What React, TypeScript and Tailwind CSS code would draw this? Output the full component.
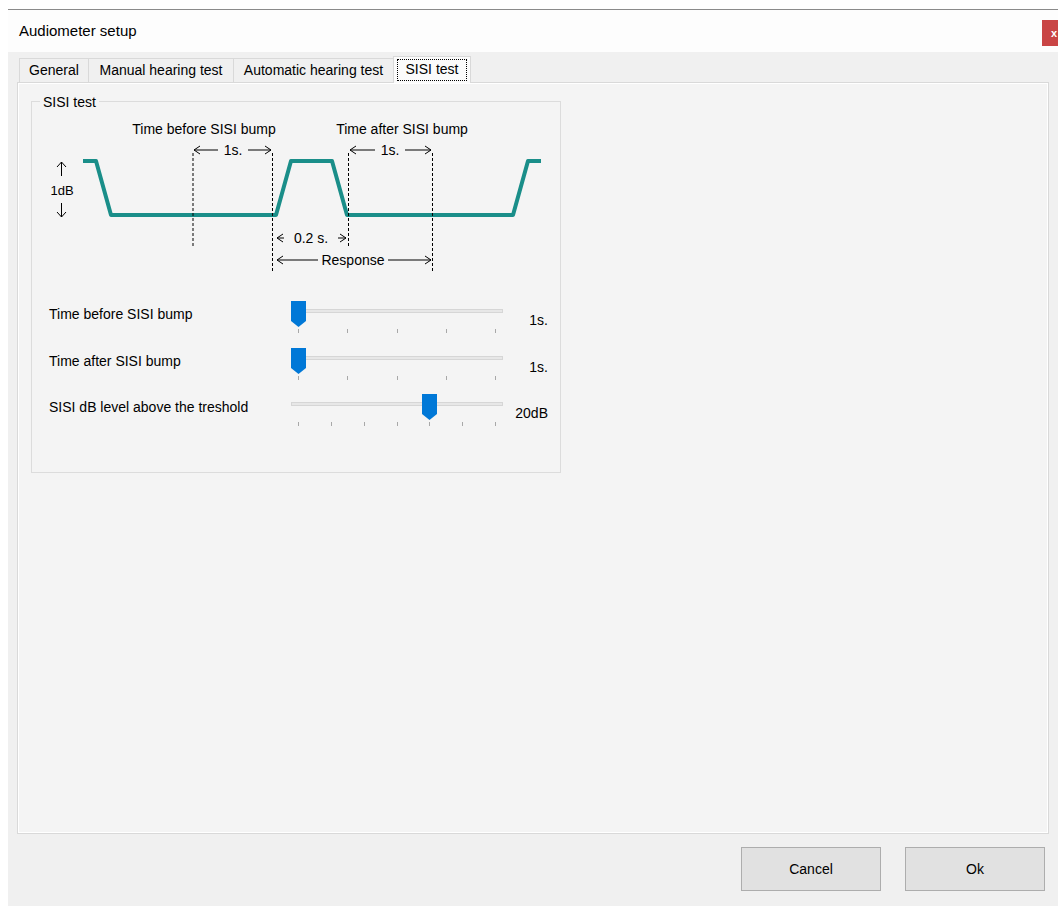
import React from 'react';

const font = { fontFamily: '"Liberation Sans", Arial, sans-serif' };

const tabs = [
    { name: 'General', w: 'w-[70px]' },
    { name: 'Manual hearing test', w: 'w-[146px]' },
    { name: 'Automatic hearing test', w: 'w-[161px]' },
];

type SliderProps = { label: string; value: string; pos: number; steps: number };

const Arrow = ({ x1, x2, y, label, cx }: { x1: number; x2: number; y: number; label: string; cx: number }) => {
    const half = label.length * 4 + 3;
    return (
        <g stroke="#000" strokeWidth={1} fill="none">
            <line x1={x1} y1={y} x2={cx - half} y2={y} />
            <line x1={cx + half} y1={y} x2={x2} y2={y} />
            <polyline points={`${x1 + 6},${y - 4} ${x1},${y} ${x1 + 6},${y + 4}`} />
            <polyline points={`${x2 - 6},${y - 4} ${x2},${y} ${x2 - 6},${y + 4}`} />
            <text x={cx} y={y + 5} textAnchor="middle" fontSize={14} fill="#000" stroke="none" style={font}>
                {label}
            </text>
        </g>
    );
};

// diagram of the level bump, drawn in window coordinates
const BumpDiagram = () => (
    <svg width={530} height={170} viewBox="31 110 530 170" className="block">
        <polyline
            points="82,161 95,161 110,215 275,215 290,161 331,161 346,215 512,215 527,161 540,161"
            fill="none"
            stroke="#1a8e89"
            strokeWidth={4}
            strokeLinejoin="round"
        />
        <g stroke="#000" strokeWidth={1} strokeDasharray="3 2">
            <line x1={192} y1={153} x2={192} y2={248} />
            <line x1={271.5} y1={153} x2={271.5} y2={272} />
            <line x1={347.5} y1={153} x2={347.5} y2={248} />
            <line x1={431.5} y1={153} x2={431.5} y2={272} />
        </g>
        <text x={203} y={134} textAnchor="middle" fontSize={14} style={font}>
            Time before SISI bump
        </text>
        <text x={401} y={134} textAnchor="middle" fontSize={14} style={font}>
            Time after SISI bump
        </text>
        <Arrow x1={193} x2={270} y={150} cx={232} label="1s." />
        <Arrow x1={349} x2={430} y={150} cx={389} label="1s." />
        <Arrow x1={276} x2={345} y={238} cx={310} label="0.2 s." />
        <Arrow x1={276} x2={430} y={260} cx={352} label="Response" />
        <g stroke="#000" strokeWidth={1} fill="none">
            <line x1={60.5} y1={162} x2={60.5} y2={176} />
            <polyline points="56,167 60.5,162 65,167" />
            <line x1={60.5} y1={203} x2={60.5} y2={217} />
            <polyline points="56,212 60.5,217 65,212" />
        </g>
        <text x={61} y={195} textAnchor="middle" fontSize={13} style={font}>
            1dB
        </text>
    </svg>
);

const Slider = ({ label, value, pos, steps }: SliderProps) => {
    const ticks = Array.from({ length: steps + 1 }, (_, i) => i);
    const left = (pos / steps) * 197;
    return (
        <div className="flex h-[46.5px] items-start">
            <div className="w-[259px] pl-[17px] pt-[5px] text-[14px] leading-[20px] text-black">{label}</div>
            <div className="relative w-[212px] h-[40px]">
                <div className="absolute left-0 right-0 top-[10px] h-[4px] bg-[#e7e7e7] border border-[#d6d6d6]" />
                <svg
                    className="absolute top-[2px]"
                    style={{ left: left }}
                    width={15}
                    height={27}
                    viewBox="0 0 15 27"
                >
                    <path d="M0 0 H15 V20 L7.5 26 L0 20 Z" fill="#0078d7" />
                </svg>
                {ticks.map((t) => (
                    <div
                        key={t}
                        className="absolute top-[30px] w-px h-[4px] bg-[#a8a8a8]"
                        style={{ left: 7 + (t / steps) * 197 }}
                    />
                ))}
            </div>
            <div className="flex-1 pr-[12px] pt-[11px] text-right text-[14px] leading-[20px] text-black">{value}</div>
        </div>
    );
};

export default function App() {
    return (
        <div className="w-[1058px] h-[906px] bg-white flex flex-col overflow-hidden" style={font}>
            <div className="h-[9px]" />
            <div className="flex-1 ml-[8px] flex flex-col border-t border-[#8a8a8a]">
                <div className="relative h-[42px] bg-[#fdfdfd] flex items-center pl-[11px] text-[15px] text-black">
                    Audiometer setup
                    <div className="absolute right-0 top-[10px] w-[16px] h-[26px] bg-[#c94545] flex items-center justify-end pr-[1px] text-white text-[11px] font-bold">
                        x
                    </div>
                </div>
                <div className="flex-1 bg-[#f0f0f0] flex flex-col px-[9px] pt-[3px]">
                    <div className="h-[27px] flex items-end pl-[2px] text-[14px] text-black">
                        {tabs.map((t) => (
                            <div
                                key={t.name}
                                className={`${t.w} h-[24px] flex items-center justify-center border border-b-0 border-[#d9d9d9] -ml-px first:ml-0 bg-[#f0f0f0]`}
                            >
                                {t.name}
                            </div>
                        ))}
                        <div className="w-[78px] h-[27px] -ml-px flex items-center justify-center border border-b-0 border-[#d9d9d9] bg-[#fbfbfb] relative z-10 -mb-px pb-px">
                            <span className="w-[70px] h-[22px] flex items-center justify-center border border-dotted border-black">
                                SISI test
                            </span>
                        </div>
                    </div>
                    <div className="h-[752px] border border-[#d9d9d9] bg-[#f4f4f4] shadow-[inset_1px_1px_0_#ffffff,inset_-1px_-1px_0_#ffffff] pt-[18px] pl-[13px]">
                        <div className="relative w-[530px] h-[372px] border border-[#dcdcdc] pt-[8px]">
                            <div className="absolute left-[8px] -top-[10px] px-[3px] bg-[#f4f4f4] text-[14px] leading-[20px] text-black">
                                SISI test
                            </div>
                            <BumpDiagram />
                            <div className="mt-[19px]">
                                <Slider label="Time before SISI bump" value="1s." pos={0} steps={4} />
                                <Slider label="Time after SISI bump" value="1s." pos={0} steps={4} />
                                <Slider label="SISI dB level above the treshold" value="20dB" pos={4} steps={6} />
                            </div>
                        </div>
                    </div>
                    <div className="flex justify-end gap-[24px] pt-[13px] pr-[4px]">
                        <button className="w-[140px] h-[44px] bg-[#e1e1e1] border border-[#adadad] text-[14px] text-black">
                            Cancel
                        </button>
                        <button className="w-[140px] h-[44px] bg-[#e1e1e1] border border-[#adadad] text-[14px] text-black">
                            Ok
                        </button>
                    </div>
                </div>
            </div>
        </div>
    );
}
